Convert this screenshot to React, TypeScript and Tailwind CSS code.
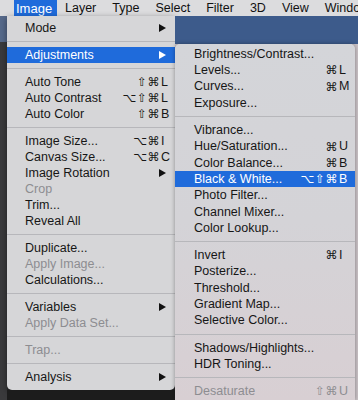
import React from "react";

type Row =
  | { sep: true }
  | {
      sep?: false;
      label: string;
      mods?: string;
      k?: string;
      sub?: boolean;
      disabled?: boolean;
      active?: boolean;
    };

const mainItems: Row[] = [
  { label: "Mode", sub: true },
  { sep: true },
  { label: "Adjustments", sub: true, active: true },
  { sep: true },
  { label: "Auto Tone", mods: "⇧⌘", k: "L" },
  { label: "Auto Contrast", mods: "⌥⇧⌘", k: "L" },
  { label: "Auto Color", mods: "⇧⌘", k: "B" },
  { sep: true },
  { label: "Image Size...", mods: "⌥⌘", k: "I" },
  { label: "Canvas Size...", mods: "⌥⌘", k: "C" },
  { label: "Image Rotation", sub: true },
  { label: "Crop", disabled: true },
  { label: "Trim..." },
  { label: "Reveal All" },
  { sep: true },
  { label: "Duplicate..." },
  { label: "Apply Image...", disabled: true },
  { label: "Calculations..." },
  { sep: true },
  { label: "Variables", sub: true },
  { label: "Apply Data Set...", disabled: true },
  { sep: true },
  { label: "Trap...", disabled: true },
  { sep: true },
  { label: "Analysis", sub: true },
];

const subItems: Row[] = [
  { label: "Brightness/Contrast..." },
  { label: "Levels...", mods: "⌘", k: "L" },
  { label: "Curves...", mods: "⌘", k: "M" },
  { label: "Exposure..." },
  { sep: true },
  { label: "Vibrance..." },
  { label: "Hue/Saturation...", mods: "⌘", k: "U" },
  { label: "Color Balance...", mods: "⌘", k: "B" },
  { label: "Black & White...", mods: "⌥⇧⌘", k: "B", active: true },
  { label: "Photo Filter..." },
  { label: "Channel Mixer..." },
  { label: "Color Lookup..." },
  { sep: true },
  { label: "Invert", mods: "⌘", k: "I" },
  { label: "Posterize..." },
  { label: "Threshold..." },
  { label: "Gradient Map..." },
  { label: "Selective Color..." },
  { sep: true },
  { label: "Shadows/Highlights..." },
  { label: "HDR Toning..." },
  { sep: true },
  { label: "Desaturate", mods: "⇧⌘", k: "U", disabled: true },
];

const menuBar = ["Layer", "Type", "Select", "Filter", "3D", "View", "Window"];

function Arrow({ white }: { white?: boolean }) {
  return (
    <svg width="7" height="8" viewBox="0 0 7 8" className="mr-[9px]">
      <polygon points="0,0 7,4 0,8" fill={white ? "#ffffff" : "#111111"} />
    </svg>
  );
}

function MenuRow({ row, sub }: { row: Row; sub?: boolean }) {
  if (row.sep) {
    return (
      <div className="h-[11px] flex items-center">
        <div className="h-px w-full bg-[#b7b7bb]" />
      </div>
    );
  }
  const color = row.active
    ? "bg-[#1f6bdb] text-white"
    : row.disabled
      ? "text-[#8d8d91]"
      : "text-[#161616]";
  return (
    <div
      className={`flex items-center whitespace-nowrap ${sub ? "h-[16.3px] pl-[19px]" : "h-[16px] pl-[18px]"} ${color}`}
    >
      <span className="flex-1">{row.label}</span>
      {row.k && (
        <span className="flex items-center">
          <span className="text-[12px] tracking-[0.5px] font-['DejaVu_Sans',sans-serif]">
            {row.mods}
          </span>
          <span className={sub ? "w-[17px] pl-[1px]" : "w-[15px] pl-[1px]"}>{row.k}</span>
        </span>
      )}
      {row.sub && <Arrow white={row.active} />}
    </div>
  );
}

export default function App() {
  return (
    <div className="w-[358px] h-[400px] overflow-hidden bg-[#2a2a2c] font-['Liberation_Sans',Arial,sans-serif] text-[12.5px] leading-none">
      {/* menu bar */}
      <div className="h-[16px] bg-[#dcdcde] flex items-center text-[#111] whitespace-nowrap">
        <div className="ml-[14px] w-[43px] shrink-0 h-full flex items-center bg-[#1f6bdb] text-white pl-[2px] text-[13px]">
          Image
        </div>
        {menuBar.map((m) => (
          <div key={m} className="px-[8px] shrink-0">
            {m}
          </div>
        ))}
      </div>

      <div className="flex h-[384px]">
        {/* left strip of the app behind */}
        <div className="w-[7px] flex flex-col">
          <div className="h-[26px] bg-[#56698a]" />
          <div className="flex-1 bg-[#3a3a3c]" />
        </div>

        {/* Image menu */}
        <div className="w-[168px] flex flex-col">
          <div className="bg-[#d6d6d8] pt-[4px] pb-[5px] rounded-b-[5px] shadow-[0_2px_6px_rgba(0,0,0,0.45)]">
            {mainItems.map((r, i) => (
              <MenuRow key={i} row={r} />
            ))}
          </div>
          <div className="flex-1 bg-[#1c1c1c]" />
        </div>

        {/* Adjustments submenu */}
        <div className="flex-1 flex flex-col bg-[#c9c1c5]">
          <div className="h-[28px] bg-[#3d5b8b]" />
          <div className="flex-1 mr-[3px] pt-[2px] rounded-t-[5px] bg-gradient-to-b from-[#d4d5d9] via-[#d4d3d7] to-[#d8cfd3] shadow-[0_0_4px_rgba(0,0,0,0.35)]">
            {subItems.map((r, i) => (
              <MenuRow key={i} row={r} sub />
            ))}
          </div>
        </div>
      </div>
    </div>
  );
}
